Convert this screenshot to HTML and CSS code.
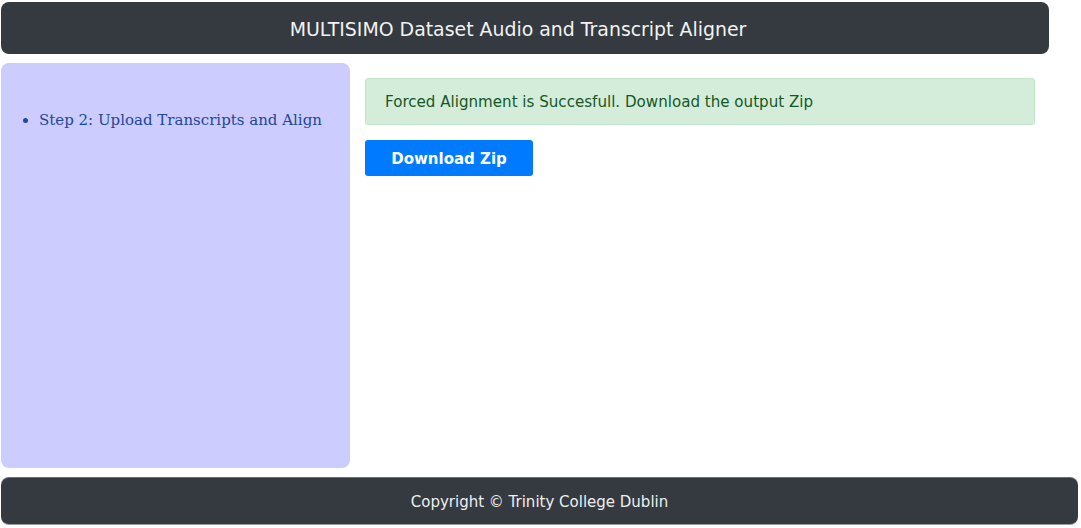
FILE: index.html
```html
<!DOCTYPE html>
<html>
<head>
<meta charset="utf-8">
<link rel="stylesheet" href="styles.css">
</head>
<body>
<header class="topbar">MULTISIMO Dataset Audio and Transcript Aligner</header>
<div class="main">
  <aside class="sidebar">
    <ul class="steps">
      <li>Step 2: Upload Transcripts and Align</li>
    </ul>
  </aside>
  <section class="content">
    <div class="alert">Forced Alignment is Succesfull. Download the output Zip</div>
    <button class="btn">Download Zip</button>
  </section>
</div>
<footer class="footer">Copyright © Trinity College Dublin</footer>
</body>
</html>
```

FILE: styles.css
```css
html, body {
  margin: 0;
  padding: 0;
  background: #fff;
}
body {
  font-family: "DejaVu Sans", sans-serif;
  padding: 2px 3px 0 1px;
}
.topbar {
  width: 1048px;
  height: 52px;
  box-sizing: border-box;
  background: #343a40;
  color: #f2f2f2;
  border-radius: 8px;
  display: flex;
  align-items: center;
  justify-content: center;
  font-size: 18.9px;
  padding: 1px 14px 0 0;
}
.main {
  display: flex;
  margin-top: 9px;
}
.sidebar {
  width: 349px;
  height: 405px;
  box-sizing: border-box;
  background: #ccccff;
  border-radius: 8px;
  padding-top: 48px;
}
.steps {
  margin: 0;
  padding-left: 38px;
  font-family: "DejaVu Serif", serif;
  font-size: 15px;
  color: #22479c;
}
.content {
  padding: 15px 0 0 15px;
  width: 670px;
}
.alert {
  height: 47px;
  box-sizing: border-box;
  background: #d4edda;
  border: 1px solid #c3e6cb;
  border-radius: 3px;
  color: #155724;
  font-size: 15.1px;
  padding-left: 19px;
  display: flex;
  align-items: center;
}
.btn {
  margin-top: 15px;
  width: 168px;
  height: 36px;
  background: #007bff;
  color: #fff;
  border: none;
  border-radius: 3px;
  font-family: "DejaVu Sans", sans-serif;
  font-weight: bold;
  font-size: 15px;
  display: block;
  padding: 1px 0 0;
}
.footer {
  margin-top: 9px;
  width: 1077px;
  height: 48px;
  box-sizing: border-box;
  background: #343a40;
  border-bottom: 1px solid #9a9ea3;
  border-top: 1px solid #6b7075;
  border-radius: 8px;
  color: #eeeeee;
  font-size: 15px;
  display: flex;
  align-items: center;
  justify-content: center;
  padding-top: 1px;
}
```
